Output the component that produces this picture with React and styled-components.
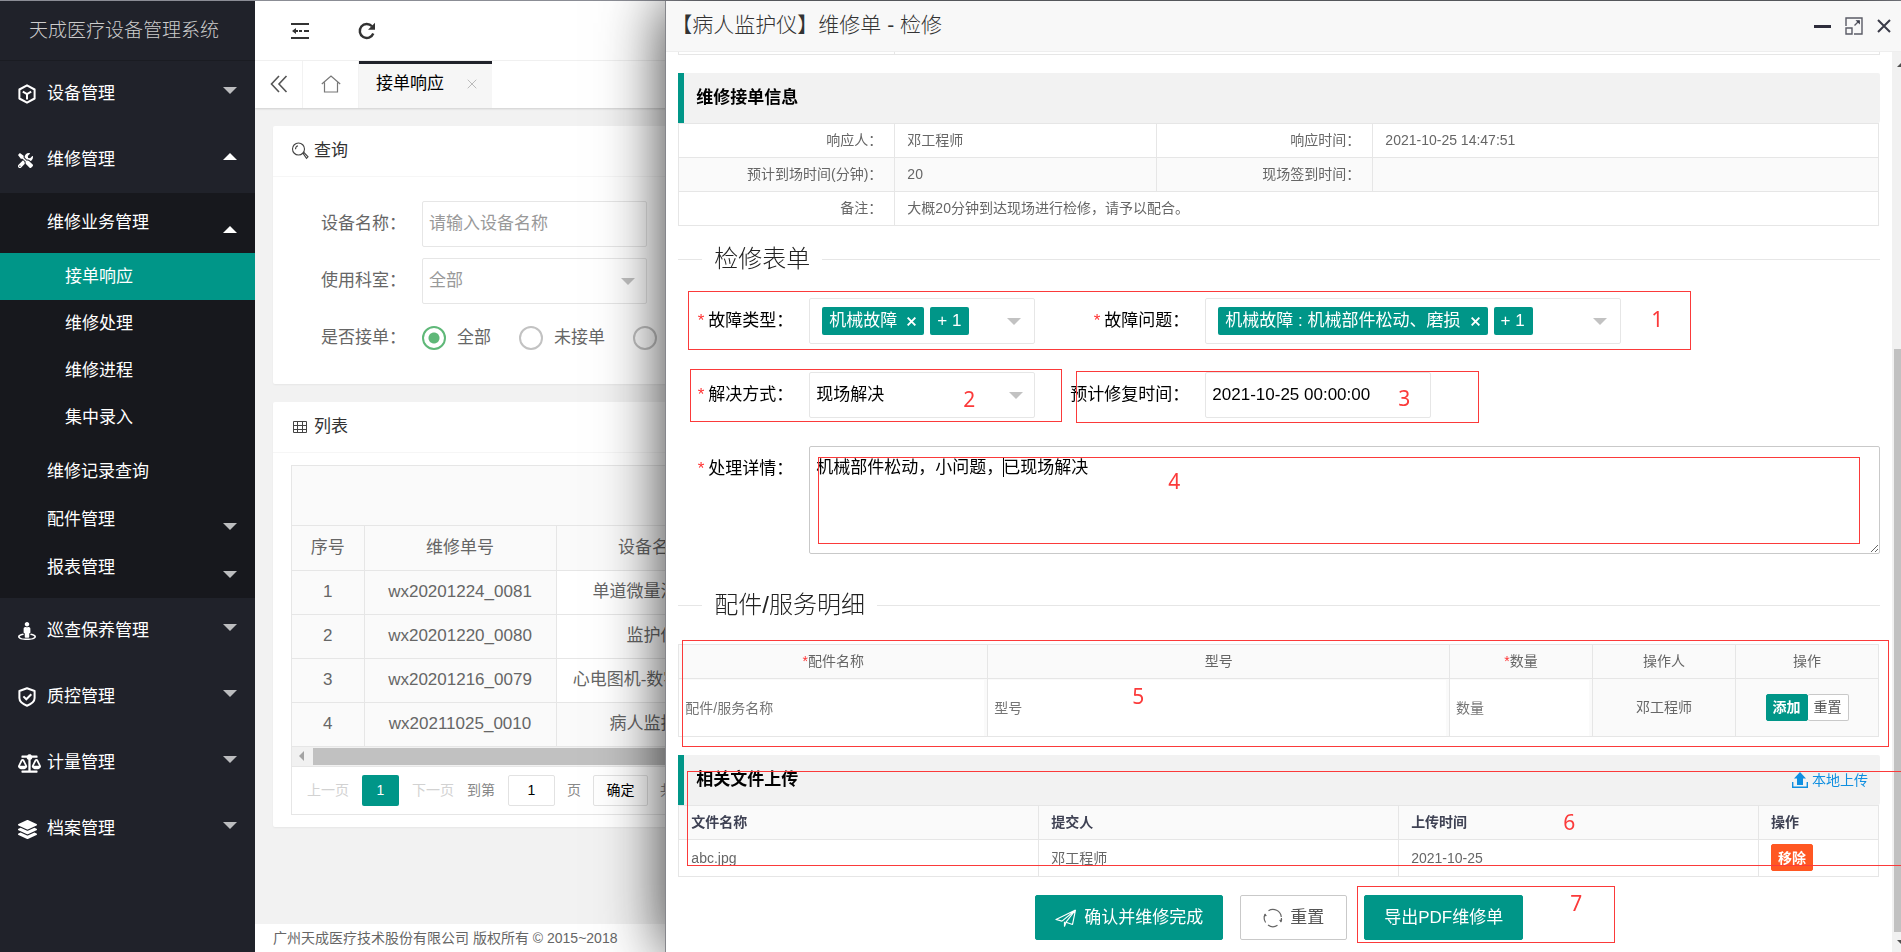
import React from "react";
import styled, { createGlobalStyle, css } from "styled-components";
import { FaBalanceScale, FaLayerGroup, FaStreetView, FaTools } from "react-icons/fa";

const GlobalStyle = createGlobalStyle`
  * {
    box-sizing: border-box;
  }
  body {
    margin: 0;
    overflow: hidden;
    background: #f2f2f2;
  }
  body, button, input, select, textarea {
    font-family: "Liberation Sans", "Noto Sans CJK SC", sans-serif;
    font-size: 17px;
    line-height: 24px;
  }
  button, a, select {
    cursor: pointer;
  }
`;

/* ---------- icons ---------- */

const BoxIcon = () => (
  <svg width="18" height="20" viewBox="0 0 18 20" fill="none" stroke="currentColor" strokeWidth="2">
    <path d="M9 1.3 16.6 5.5v9L9 18.7 1.4 14.5v-9z" strokeLinejoin="round" />
    <path d="M4.8 7.6 9 10l4.2-2.4M9 10v5.4" />
  </svg>
);

const ShieldIcon = () => (
  <svg width="18" height="20" viewBox="0 0 18 20" fill="none" stroke="currentColor" strokeWidth="2">
    <path d="M9 1.3 16.6 4v7c0 3.6-3.4 6-7.6 7.7C4.8 17 1.4 14.6 1.4 11V4z" strokeLinejoin="round" />
    <path d="m5.4 9.4 2.9 2.9 5-5" />
  </svg>
);

const IndentIcon = () => (
  <svg width="20" height="18" viewBox="0 0 20 18" fill="#333">
    <path d="M1 1h18v2H1zM9 8h3v2H9zM14 8h5v2h-5zM1 15h18v2H1zM6 6v6L2 9z" />
    <path d="M5 8h3v2H5z" />
  </svg>
);

const RefreshIcon = () => (
  <svg width="18" height="18" viewBox="0 0 18 18" fill="none" stroke="#333" strokeWidth="2.4">
    <path d="M15.3 11.5A7 7 0 1 1 14 4.3" />
    <path d="M17 .8v7h-7z" fill="#333" stroke="none" />
  </svg>
);

const DoubleLeftIcon = () => (
  <svg width="18" height="18" viewBox="0 0 18 18" fill="none" stroke="#555" strokeWidth="1.6">
    <path d="M9 1 1.5 9 9 17M16.5 1 9 9l7.5 8" />
  </svg>
);

const HomeIcon = () => (
  <svg width="20" height="18" viewBox="0 0 20 18" fill="none" stroke="#777" strokeWidth="1.2">
    <path d="M.8 9 10 1l9.2 8M3.5 7.5v9.5h13V7.5" />
  </svg>
);

const SearchIcon = () => (
  <svg width="18" height="18" viewBox="0 0 18 18" fill="none" stroke="#444" strokeWidth="1.1">
    <circle cx="7.5" cy="7" r="6" />
    <path d="M4.5 7.2c0-1.8 1-3 2.4-3.5M12 11.4l1-.8 4 4.2-1.5 1.6z" />
  </svg>
);

const GridIcon = () => (
  <svg width="18" height="12" viewBox="0 0 18 12" fill="none" stroke="#444">
    <path d="M2.5.5h13v11h-13zM2.5 4.5h13M2.5 8.5h13M6.5.5v11M11.5.5v11" />
  </svg>
);

const PlaneIcon = () => (
  <svg width="22" height="18" viewBox="0 0 22 18" fill="none" stroke="#fff" strokeWidth="1.2" strokeLinejoin="round">
    <path d="M20.5 1 1 10.5l6 1.6M20.5 1 17.5 15.5l-6.5-2.3M20.5 1 7 12.1M20.5 1 11 13.2l-1.500 4V12.8" />
  </svg>
);

const CycleIcon = () => (
  <svg width="20" height="20" viewBox="0 0 20 20" fill="none" stroke="#666" strokeWidth="1.2">
    <path d="M5.5 2.7A8.4 8.4 0 0 1 18.3 9M14.5 17.3A8.4 8.4 0 0 1 5 17" />
    <path d="M2.2 6A8.4 8.4 0 0 0 2.6 14.5M17.8 14a8.4 8.4 0 0 0 .6-4" />
    <path d="m.6 8.5 1.5-3 1.8 2.6zM19.4 11.5l-1.5 3-1.8-2.6z" fill="#666" stroke="none" />
  </svg>
);

const UploadIcon = () => (
  <svg width="16" height="16" viewBox="0 0 16 16" fill="#0f8fe0">
    <path d="m8 0 6 6.500h-3V13H5V6.500H2z" />
    <path d="M.7 10v5.2h14.6V10" fill="none" stroke="#0f8fe0" strokeWidth="1.4" />
  </svg>
);

const MaximizeIcon = () => (
  <svg width="18" height="18" viewBox="0 0 18 18" fill="none" stroke="#5a5b66" strokeWidth="1.4">
    <path d="M1 9V1h16v16H9M1 11h6v6H1zM9.5 8.5 14 4" />
    <path d="M10.5 3.2h4.4v4.4z" fill="#3a3b48" stroke="none" />
  </svg>
);

const CloseIcon = ({ size = 14, color = "#3a3b48", width = 2 }) => (
  <svg width={size} height={size} viewBox="0 0 14 14" fill="none" stroke={color} strokeWidth={width}>
    <path d="m1 1 12 12M13 1 1 13" />
  </svg>
);

/* ---------- side menu ---------- */

const Shell = styled.div`
  display: flex;
  height: 100vh;
  border-top: 1px solid #8b8d95;
`;

const Side = styled.nav`
  width: 255px;
  flex: none;
  background: #20222a;
  color: #fff;
  overflow: hidden;
`;

const Brand = styled.h1`
  margin: 0;
  height: 60px;
  padding-right: 7px;
  line-height: 59px;
  text-align: center;
  font-size: 19px;
  font-weight: 300;
  color: #ccc;
  border-bottom: 1px solid #1a1c22;
`;

const Triangle = styled.span`
  width: 0;
  height: 0;
  border: 7px solid transparent;
  ${(p) =>
    p.$up
      ? css`
          border-top: 0;
          border-bottom-color: #fff;
        `
      : css`
          border-bottom: 0;
          border-top-color: ${p.$color || "#bcbdbf"};
        `}
`;

const MenuItem = styled.a`
  display: flex;
  align-items: center;
  height: ${(p) => (p.$level === 0 ? 66 : p.$level === 1 ? 48 : 47)}px;
  padding: 0 18px 0 ${(p) => (p.$level === 0 ? 18 : p.$level === 1 ? 47 : 65)}px;
  background: ${(p) => (p.$active ? "#009688" : "transparent")};
  color: #fff;
  text-decoration: none;

  svg {
    flex: none;
  }
  ${Triangle} {
    margin-left: auto;
    margin-top: ${(p) => (p.$level === 0 ? -8 : 12)}px;
  }
`;

const IconSlot = styled.span`
  display: flex;
  align-items: center;
  width: 29px;
  height: 24px;
`;

const SubMenu = styled.div`
  background: #17181d;
  padding: 6px 0;
`;

const SubGroup = styled.div`
  padding: 6px 0 7px;
`;

/* ---------- list page ---------- */

const Main = styled.main`
  flex: 1;
  min-width: 0;
  display: flex;
  flex-direction: column;
  overflow: hidden;
  color: #666;
`;

const TopBar = styled.header`
  display: flex;
  align-items: center;
  gap: 48px;
  height: 60px;
  flex: none;
  padding-left: 35px;
  background: #fff;
  border-bottom: 1px solid #f2f2f2;
`;

const BareButton = styled.button`
  display: flex;
  align-items: center;
  justify-content: center;
  padding: 0;
  border: 0;
  background: none;
`;

const TabBar = styled.div`
  display: flex;
  height: 47px;
  flex: none;
  background: #fff;
  box-shadow: 0 1px 2px rgba(0, 0, 0, 0.15);
`;

const TabButton = styled(BareButton)`
  width: ${(p) => p.$width}px;
  padding-bottom: 2px;
  border-right: 1px solid #f2f2f2;
`;

const Tab = styled.div`
  display: flex;
  align-items: center;
  gap: 23px;
  padding: 0 15px 4px 17px;
  border-top: 3px solid #20222a;
  background: #f6f6f6;
  color: #000;
`;

const Content = styled.div`
  flex: 1;
  display: flex;
  flex-direction: column;
  gap: 18px;
  padding: 18px;
`;

const Card = styled.section`
  background: #fff;
  border-radius: 2px;
  box-shadow: 0 1px 2px rgba(0, 0, 0, 0.05);
`;

const CardHead = styled.h2`
  display: flex;
  align-items: center;
  gap: 5px;
  height: 51px;
  margin: 0;
  padding-left: 18px;
  font-size: 17px;
  font-weight: 400;
  color: #333;
  border-bottom: 1px solid #f6f6f6;
`;

const SearchForm = styled.form`
  display: flex;
  flex-direction: column;
  gap: 11px;
  padding: 24px 0 23px;
`;

const FormLine = styled.div`
  display: flex;
  align-items: center;
`;

const FieldLabel = styled.label`
  flex: none;
  width: ${(p) => p.$width}px;
  padding-right: 16px;
  text-align: right;
  white-space: nowrap;
`;

const fieldBox = css`
  width: ${(p) => (p.$width ? p.$width + "px" : "100%")};
  height: 46px;
  padding: 0 6px;
  border: 1px solid #e6e6e6;
  border-radius: 2px;
  background: #fff;
  color: ${(p) => p.$color || "#000"};
  outline: 0;
`;

const TextInput = styled.input`
  ${fieldBox}
  &::placeholder {
    color: #999;
  }
`;

const SelectWrap = styled.div`
  display: grid;
  align-items: center;
  width: ${(p) => p.$width}px;

  > * {
    grid-area: 1 / 1;
  }
  ${Triangle} {
    justify-self: end;
    margin-right: 12px;
    pointer-events: none;
  }
`;

const NativeSelect = styled.select`
  ${fieldBox}
  appearance: none;
`;

const Radio = styled.label`
  display: flex;
  align-items: center;
  gap: 11px;
  margin-right: 28px;
  height: 46px;
  white-space: nowrap;

  input {
    appearance: none;
    width: 24px;
    height: 24px;
    margin: 0;
    border: 2px solid #c2c2c2;
    border-radius: 50%;
  }
  input:checked {
    border-color: #5fb878;
    background: radial-gradient(#5fb878 5px, #fff 6px);
  }
`;

const TableBox = styled.div`
  margin: 12px 18px;
  border: 1px solid #e6e6e6;
  overflow: hidden;
`;

const ToolRow = styled.div`
  height: 60px;
  background: #fafafa;
  border-bottom: 1px solid #e6e6e6;
`;

const ListTable = styled.table`
  table-layout: fixed;
  width: 1900px;
  border-collapse: collapse;

  th, td {
    height: 44px;
    padding: 0;
    border: 1px solid #e6e6e6;
    border-width: 0 1px 1px 0;
    font-weight: 400;
    text-align: center;
  }
  th, td:nth-child(-n + 2), tr:last-child td {
    background: #fafafa;
  }
`;

const ScrollTrack = styled.div`
  display: flex;
  align-items: center;
  height: 20px;
  padding-left: 7px;
  gap: 9px;
  background: #f1f1f1;
  border-bottom: 1px solid #e6e6e6;
`;

const ScrollArrow = styled.span`
  border: 5px solid transparent;
  border-left: 0;
  border-right-color: #a3a3a3;
`;

const ScrollThumb = styled.div`
  flex: 1;
  height: 17px;
  background: #c1c1c1;
`;

const Pager = styled.div`
  display: flex;
  align-items: center;
  height: 47px;
  padding-left: 2px;
  font-size: 14px;
  white-space: nowrap;
  color: #888;

  > * {
    flex: none;
    font-size: 14px;
  }
`;

const PageLink = styled.button`
  width: 68px;
  border: 0;
  background: none;
  color: #d2d2d2;
  padding: 0;
`;

const CurrentPage = styled.em`
  width: 37px;
  line-height: 31px;
  border-radius: 2px;
  background: #009688;
  color: #fff;
  font-style: normal;
  text-align: center;
`;

const PageInput = styled.input`
  width: 47px;
  height: 31px;
  margin: 0 12px 0 13px;
  border: 1px solid #e2e2e2;
  border-radius: 2px;
  text-align: center;
`;

const PageConfirm = styled.button`
  width: 55px;
  height: 31px;
  margin: 0 12px;
  padding: 0;
  border: 1px solid #e2e2e2;
  border-radius: 2px;
  background: #fff;
  color: #000;
`;

const Footer = styled.footer`
  flex: none;
  height: 28px;
  line-height: 28px;
  padding-left: 18px;
  font-size: 14px;
  background: #fff;
`;

/* ---------- repair dialog ---------- */

const Dialog = styled.section`
  position: fixed;
  top: 1px;
  right: 0;
  bottom: 0;
  left: 35%;
  display: flex;
  flex-direction: column;
  border-left: 1px solid #85868b;
  background: #fff;
  box-shadow: 1px 1px 60px rgba(0, 0, 0, 0.8);
`;

const DialogHead = styled.header`
  display: flex;
  align-items: center;
  flex: none;
  height: 51px;
  padding: 0 10px 0 5px;
  background: #f8f8f8;
  border-bottom: 1px solid #eee;

  h2 {
    margin: 0 auto 2px 0;
    font-size: 21px;
    font-weight: 300;
    color: #333;
  }
`;

const HeadButton = styled(BareButton)`
  margin-left: 14px;
`;

const MinusBar = styled.span`
  width: 17px;
  height: 3px;
  background: #2e2d3c;
`;

const DialogBody = styled.div`
  flex: 1;
  min-height: 0;
  display: flex;
`;

const DialogContent = styled.div`
  flex: 1;
  min-width: 0;
  padding: 0 12px;
  overflow: hidden;
`;

const gridTable = css`
  table-layout: fixed;
  width: calc(100% - 1px);
  border-collapse: collapse;
  font-size: 14px;
  color: #666;

  th, td {
    height: 34px;
    padding: 0 12px 1px;
    border: 1px solid #e6e6e6;
    text-align: left;
    font-weight: 400;
  }
`;

const InfoTable = styled.table`
  ${gridTable}
  th {
    text-align: right;
  }
  tr:nth-child(even) {
    background: #fafafa;
  }
`;

const PreviousTail = styled.div`
  display: flex;
  height: 3px;
  margin-bottom: 18px;
  border: 1px solid #e6e6e6;
  border-top: 0;

  span {
    width: 216px;
    border-right: 1px solid #e6e6e6;
  }
`;

const Quote = styled.div`
  display: flex;
  align-items: center;
  justify-content: space-between;
  height: 50px;
  padding: 0 12px;
  border-left: 6px solid #009688;
  border-radius: 0 2px 2px 0;
  background: #f2f2f2;

  h3 {
    margin: 0;
    font-size: 17px;
    color: #000;
  }
  a {
    display: flex;
    align-items: center;
    gap: 4px;
    font-size: 14px;
    color: #0f8fe0;
    text-decoration: none;
  }
`;

const Legend = styled.h3`
  display: flex;
  align-items: center;
  gap: 12px;
  height: 34px;
  margin: ${(p) => p.$top}px 0 22px;
  font-size: 24px;
  line-height: 36px;
  font-weight: 300;
  color: #222;

  &::before, &::after {
    content: "";
    height: 1px;
    background: #e6e6e6;
  }
  &::before {
    width: 24px;
  }
  &::after {
    flex: 1;
  }
`;

const RepairForm = styled.form`
  display: flex;
  flex-direction: column;
  gap: 28px;
  color: #000;

  ${FormLine}:last-child {
    align-items: flex-start;
  }
  ${FormLine}:last-child > label {
    padding-top: 11px;
  }
`;

const Star = styled.span`
  margin-right: ${(p) => p.$gap || 0}px;
  color: #f33;
`;

const TagBox = styled.div`
  display: flex;
  align-items: center;
  gap: 6px;
  width: ${(p) => p.$width}px;
  height: 46px;
  padding: 0 13px 0 12px;
  border: 1px solid #e6e6e6;
  border-radius: 2px;

  ${Triangle} {
    margin-left: auto;
  }
`;

const Tag = styled.span`
  display: flex;
  align-items: center;
  gap: 10px;
  height: 28px;
  padding: 0 8px 0 7px;
  border-radius: 2px;
  background: #009688;
  color: #fff;
  white-space: nowrap;
`;

const TextAreaWrap = styled.div`
  flex: 1;
  position: relative;
`;

const TextArea = styled.textarea`
  display: block;
  width: 100%;
  height: 108px;
  padding: 9px 6px;
  border: 1px solid #c9c9c9;
  border-radius: 2px;
  color: #000;
  outline: 0;
`;

const Caret = styled.i`
  position: absolute;
  left: 194px;
  top: 12px;
  width: 1px;
  height: 19px;
  background: #000;
`;

const PartsTable = styled.table`
  ${gridTable}
  margin-bottom: 18px;

  th, td {
    text-align: center;
    background: #fafafa;
  }
  td {
    height: 58px;
  }
  td.edit {
    padding: 0 3px 0 0;
  }
`;

const CellInput = styled.input`
  display: block;
  width: 100%;
  height: 56px;
  padding: 0 6px;
  border: 0;
  font-size: 14px;
  background: #fff;
  outline: 0;

  &::placeholder {
    color: #757575;
  }
`;

const MiniButton = styled.button`
  height: 27px;
  padding: 0 6px;
  border: 1px solid ${(p) => (p.$plain ? "#c9c9c9" : p.$bg)};
  border-left-width: ${(p) => (p.$plain ? 0 : 1)}px;
  border-radius: 2px;
  background: ${(p) => p.$bg};
  color: ${(p) => (p.$plain ? "#555" : "#fff")};
  font-size: 14px;
  font-weight: ${(p) => (p.$plain ? 400 : 700)};
`;

const ButtonPair = styled.div`
  display: flex;
  justify-content: center;
`;

const FileTable = styled.table`
  ${gridTable}
  th {
    background: #fafafa;
    color: #3f4254;
    font-weight: 700;
  }
  td {
    height: 37px;
  }
`;

const Actions = styled.div`
  display: flex;
  justify-content: center;
  gap: 17px;
  margin-top: 18px;
`;

const ActionButton = styled.button`
  display: flex;
  align-items: center;
  gap: 7px;
  height: 45px;
  padding: 0 ${(p) => (p.$plain ? 22 : 19)}px;
  border: 1px solid ${(p) => (p.$plain ? "#c9c9c9" : "#009688")};
  border-radius: 2px;
  background: ${(p) => (p.$plain ? "#fff" : "#009688")};
  color: ${(p) => (p.$plain ? "#555" : "#fff")};
`;

const BodyScroll = styled.div`
  display: flex;
  flex-direction: column;
  align-items: flex-start;
  flex: none;
  width: 9px;
  padding: 10px 0 7px 2px;
  overflow: hidden;
  background: #f1f1f1;
`;

const BodyThumb = styled.div`
  width: 13px;
  margin: auto 0 8px;
  height: 66%;
  background: #c1c1c1;
`;

const CutArrow = styled.span`
  margin-left: 3px;
  border: 5px solid transparent;
  border-${(p) => (p.$up ? "bottom" : "top")}-color: #505050;
  border-${(p) => (p.$up ? "top" : "bottom")}-width: 0;
`;

/* numbered call-outs lying over the dialog */
const Callout = styled.div`
  position: absolute;
  left: ${(p) => p.$x}px;
  top: ${(p) => p.$y}px;
  ${(p) => (p.$w ? `width: ${p.$w}px;` : "right: 0; border-right: 0 !important;")}
  height: ${(p) => p.$h}px;
  border: 1px solid #fb3a3a;
  pointer-events: none;

  b {
    position: absolute;
    left: ${(p) => p.$nx}px;
    top: ${(p) => p.$ny}px;
    font: 400 21px/24px "Noto Sans", sans-serif;
    color: #fb3a3a;
  }
`;

const callouts = [
  { x: 22, y: 290, w: 1003, h: 59, nx: 962, ny: 15 },
  { x: 24, y: 368, w: 372, h: 53, nx: 272, ny: 17 },
  { x: 410, y: 370, w: 403, h: 52, nx: 321, ny: 14 },
  { x: 152, y: 456, w: 1042, h: 87, nx: 349, ny: 11 },
  { x: 16, y: 639, w: 1207, h: 107, nx: 449, ny: 43 },
  { x: 21, y: 770, w: 0, h: 95, nx: 875, ny: 38 },
  { x: 691, y: 885, w: 258, h: 57, nx: 212, ny: 4 },
];

const orders = [
  ["wx20201224_0081", "单道微量注射泵"],
  ["wx20201220_0080", "监护仪"],
  ["wx20201216_0079", "心电图机-数字心电图"],
  ["wx20211025_0010", "病人监护仪"],
];

function TopItem({ icon, text, up }) {
  return (
    <MenuItem href="#" $level={0}>
      <IconSlot>{icon}</IconSlot>
      {text}
      <Triangle $up={up} />
    </MenuItem>
  );
}

function SideMenu() {
  return (
    <Side>
      <Brand>天成医疗设备管理系统</Brand>
      <TopItem icon={<BoxIcon />} text="设备管理" />
      <TopItem icon={<FaTools size={15} />} text="维修管理" up />
      <SubMenu>
        <MenuItem href="#" $level={1}>
          维修业务管理
          <Triangle $up />
        </MenuItem>
        <SubGroup>
          {["接单响应", "维修处理", "维修进程", "集中录入"].map((text, i) => (
            <MenuItem href="#" key={text} $level={2} $active={i === 0}>
              {text}
            </MenuItem>
          ))}
        </SubGroup>
        <MenuItem href="#" $level={1}>维修记录查询</MenuItem>
        <MenuItem href="#" $level={1}>
          配件管理
          <Triangle />
        </MenuItem>
        <MenuItem href="#" $level={1}>
          报表管理
          <Triangle />
        </MenuItem>
      </SubMenu>
      <TopItem icon={<FaStreetView size={18} />} text="巡查保养管理" />
      <TopItem icon={<ShieldIcon />} text="质控管理" />
      <TopItem icon={<FaBalanceScale size={23} />} text="计量管理" />
      <TopItem icon={<FaLayerGroup size={19} />} text="档案管理" />
    </Side>
  );
}

function ListPage() {
  return (
    <Main>
      <TopBar>
        <BareButton aria-label="收起菜单"><IndentIcon /></BareButton>
        <BareButton aria-label="刷新"><RefreshIcon /></BareButton>
      </TopBar>
      <TabBar>
        <TabButton $width={48} aria-label="向左"><DoubleLeftIcon /></TabButton>
        <TabButton $width={56} aria-label="主页"><HomeIcon /></TabButton>
        <Tab>
          接单响应
          <BareButton aria-label="关闭标签"><CloseIcon size={10} color="#bbb" width={1.4} /></BareButton>
        </Tab>
      </TabBar>
      <Content>
        <Card>
          <CardHead><SearchIcon />查询</CardHead>
          <SearchForm>
            <FormLine>
              <FieldLabel $width={149} htmlFor="device">设备名称：</FieldLabel>
              <TextInput id="device" $width={225} placeholder="请输入设备名称" />
            </FormLine>
            <FormLine>
              <FieldLabel $width={149} htmlFor="dept">使用科室：</FieldLabel>
              <SelectWrap $width={225}>
                <NativeSelect id="dept" $color="#999">
                  <option>全部</option>
                </NativeSelect>
                <Triangle $color="#c2c2c2" />
              </SelectWrap>
            </FormLine>
            <FormLine>
              <FieldLabel as="span" $width={149}>是否接单：</FieldLabel>
              <Radio><input type="radio" name="taken" defaultChecked />全部</Radio>
              <Radio><input type="radio" name="taken" />未接单</Radio>
              <Radio><input type="radio" name="taken" />已接单</Radio>
            </FormLine>
          </SearchForm>
        </Card>
        <Card>
          <CardHead><GridIcon />列表</CardHead>
          <TableBox>
            <ToolRow />
            <ListTable>
              <colgroup>
                <col style={{ width: 72 }} />
                <col style={{ width: 192 }} />
                <col style={{ width: 192 }} />
                <col />
              </colgroup>
              <thead>
                <tr><th>序号</th><th>维修单号</th><th>设备名称</th><th /></tr>
              </thead>
              <tbody>
                {orders.map(([no, name], i) => (
                  <tr key={no}><td>{i + 1}</td><td>{no}</td><td>{name}</td><td /></tr>
                ))}
              </tbody>
            </ListTable>
            <ScrollTrack><ScrollArrow /><ScrollThumb /></ScrollTrack>
            <Pager>
              <PageLink>上一页</PageLink>
              <CurrentPage>1</CurrentPage>
              <PageLink>下一页</PageLink>
              <span>到第</span>
              <PageInput aria-label="页码" defaultValue="1" />
              <span>页</span>
              <PageConfirm>确定</PageConfirm>
              <span>共</span>
            </Pager>
          </TableBox>
        </Card>
      </Content>
      <Footer>广州天成医疗技术股份有限公司 版权所有 © 2015~2018</Footer>
    </Main>
  );
}

function Tags({ id, width, text }) {
  return (
    <TagBox $width={width} role="combobox" aria-labelledby={id} aria-expanded="false" tabIndex={0}>
      <Tag>
        {text}
        <BareButton type="button" aria-label="移除标签"><CloseIcon size={9} color="#fff" width={3} /></BareButton>
      </Tag>
      <Tag>+ 1</Tag>
      <Triangle $color="#c2c2c2" />
    </TagBox>
  );
}

function RepairDialog() {
  return (
    <Dialog role="dialog" aria-label="维修单">
      <DialogHead>
        <h2>【病人监护仪】维修单 - 检修</h2>
        <HeadButton aria-label="最小化"><MinusBar /></HeadButton>
        <HeadButton aria-label="最大化"><MaximizeIcon /></HeadButton>
        <HeadButton aria-label="关闭"><CloseIcon /></HeadButton>
      </DialogHead>
      <DialogBody>
        <DialogContent>
          <PreviousTail><span /></PreviousTail>
          <Quote><h3>维修接单信息</h3></Quote>
          <InfoTable>
            <colgroup>
              <col style={{ width: 216 }} />
              <col style={{ width: 262 }} />
              <col style={{ width: 216 }} />
              <col />
            </colgroup>
            <tbody>
              <tr><th>响应人：</th><td>邓工程师</td><th>响应时间：</th><td>2021-10-25 14:47:51</td></tr>
              <tr><th>预计到场时间(分钟)：</th><td>20</td><th>现场签到时间：</th><td /></tr>
              <tr><th>备注：</th><td colSpan={3}>大概20分钟到达现场进行检修，请予以配合。</td></tr>
            </tbody>
          </InfoTable>

          <Legend $top={16}>检修表单</Legend>
          <RepairForm>
            <FormLine>
              <FieldLabel as="span" id="fault-type" $width={131}><Star $gap={4}>*</Star>故障类型：</FieldLabel>
              <Tags id="fault-type" width={226} text="机械故障" />
              <FieldLabel as="span" id="fault-issue" $width={170}><Star $gap={4}>*</Star>故障问题：</FieldLabel>
              <Tags id="fault-issue" width={416} text="机械故障 : 机械部件松动、磨损" />
            </FormLine>
            <FormLine>
              <FieldLabel htmlFor="solution" $width={131}><Star $gap={4}>*</Star>解决方式：</FieldLabel>
              <SelectWrap $width={226}>
                <NativeSelect id="solution">
                  <option>现场解决</option>
                </NativeSelect>
                <Triangle $color="#c2c2c2" />
              </SelectWrap>
              <FieldLabel htmlFor="due" $width={170}>预计修复时间：</FieldLabel>
              <TextInput id="due" $width={226} defaultValue="2021-10-25 00:00:00" />
            </FormLine>
            <FormLine>
              <FieldLabel htmlFor="detail" $width={131}><Star $gap={4}>*</Star>处理详情：</FieldLabel>
              <TextAreaWrap>
                <TextArea id="detail" defaultValue="机械部件松动，小问题，已现场解决" />
                <Caret />
              </TextAreaWrap>
            </FormLine>
          </RepairForm>

          <Legend $top={34}>配件/服务明细</Legend>
          <PartsTable>
            <colgroup>
              <col style={{ width: 309 }} />
              <col />
              <col style={{ width: 143 }} />
              <col style={{ width: 143 }} />
              <col style={{ width: 143 }} />
            </colgroup>
            <thead>
              <tr>
                <th><Star>*</Star>配件名称</th>
                <th>型号</th>
                <th><Star>*</Star>数量</th>
                <th>操作人</th>
                <th>操作</th>
              </tr>
            </thead>
            <tbody>
              <tr>
                <td className="edit"><CellInput aria-label="配件名称" placeholder="配件/服务名称" /></td>
                <td className="edit"><CellInput aria-label="型号" placeholder="型号" /></td>
                <td className="edit"><CellInput aria-label="数量" placeholder="数量" /></td>
                <td>邓工程师</td>
                <td>
                  <ButtonPair>
                    <MiniButton $bg="#009688">添加</MiniButton>
                    <MiniButton $bg="#fff" $plain>重置</MiniButton>
                  </ButtonPair>
                </td>
              </tr>
            </tbody>
          </PartsTable>

          <Quote>
            <h3>相关文件上传</h3>
            <a href="#"><UploadIcon />本地上传</a>
          </Quote>
          <FileTable>
            <colgroup>
              <col style={{ width: "30%" }} />
              <col style={{ width: "30%" }} />
              <col style={{ width: "30%" }} />
              <col style={{ width: "10%" }} />
            </colgroup>
            <thead>
              <tr><th>文件名称</th><th>提交人</th><th>上传时间</th><th>操作</th></tr>
            </thead>
            <tbody>
              <tr>
                <td>abc.jpg</td>
                <td>邓工程师</td>
                <td>2021-10-25</td>
                <td><MiniButton $bg="#ff5722">移除</MiniButton></td>
              </tr>
            </tbody>
          </FileTable>
          <Actions>
            <ActionButton><PlaneIcon />确认并维修完成</ActionButton>
            <ActionButton $plain><CycleIcon />重置</ActionButton>
            <ActionButton>导出PDF维修单</ActionButton>
          </Actions>
        </DialogContent>
        <BodyScroll><CutArrow $up /><BodyThumb /><CutArrow /></BodyScroll>
      </DialogBody>
      {callouts.map((c, i) => (
        <Callout key={i} $x={c.x} $y={c.y} $w={c.w} $h={c.h} $nx={c.nx} $ny={c.ny}><b>{i + 1}</b></Callout>
      ))}
    </Dialog>
  );
}

export default function App() {
  return (
    <>
      <GlobalStyle />
      <Shell lang="zh-CN">
        <SideMenu />
        <ListPage />
        <RepairDialog />
      </Shell>
    </>
  );
}
